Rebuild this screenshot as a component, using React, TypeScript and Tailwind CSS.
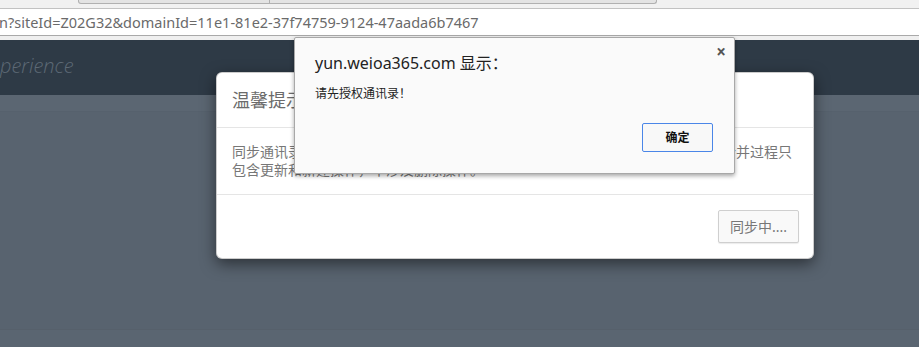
import React from "react";

const cjk = { fontFamily: '"Noto Sans", "Noto Sans CJK SC", sans-serif' };

export default function App() {
  return (
    <div
      className="relative w-[919px] h-[347px] overflow-hidden bg-[#58636f] flex flex-col"
      style={cjk}
    >
      {/* tab strip */}
      <div className="h-[9px] bg-[#f1f1f1] border-b border-[#c2c2c2] flex items-start shrink-0">
        <div className="w-[78px]" />
        <div className="w-[192px] h-[4px] bg-[#e3e3e3] border-b border-l border-r border-[#b0b0b0] rounded-bl-[3px]" />
        <div className="w-[387px] h-[4px] bg-[#e3e3e3] border-b border-r border-[#b0b0b0] rounded-br-[3px]" />
      </div>
      {/* address bar */}
      <div className="h-[27px] bg-white border-b border-[#a9a9a9] flex items-center shrink-0">
        <span className="text-[14.5px] leading-[20px] text-[#6a6a6a] whitespace-nowrap -ml-[1px]">
          n?siteId=Z02G32&amp;domainId=11e1-81e2-37f74759-9124-47aada6b7467
        </span>
      </div>
      <div className="h-[4px] bg-[#efefef] shrink-0" />
      {/* dark header */}
      <div className="h-[55px] bg-[#2e3a46] flex items-start shrink-0">
        <span
          className="mt-[14px] text-[20px] leading-[24px] italic font-light text-[#5d6975] whitespace-nowrap"
          style={{ fontFamily: '"Open Sans", sans-serif' }}
        >
          perience
        </span>
      </div>
      <div className="h-[17px] bg-[#5b6672] border-b border-[#56616d] shrink-0" />
      <div className="flex-1" />
      <div className="h-[18px] border-t border-[#56606b] bg-[#5a6571] shrink-0" />

      {/* bootstrap modal */}
      <div className="absolute left-[216px] top-[72px] w-[598px] h-[187px] bg-white rounded-[6px] border border-black/20 shadow-[0_5px_15px_rgba(0,0,0,0.5)] flex flex-col">
        <div className="h-[55px] px-[15px] flex items-center border-b border-[#e5e5e5]">
          <span className="text-[18px] leading-[24px] text-[#6b6b6b]">温馨提示</span>
        </div>
        <div className="px-[15px] py-[15px] text-[14px] leading-[18px] text-[#777]">
          <div className="whitespace-nowrap">同步通讯录将把本系统的部门和人员信息同步到微信企业号通讯录中进行合并，合并过程只</div>
          <div className="whitespace-nowrap">包含更新和新建操作，不涉及删除操作。</div>
        </div>
        <div className="flex-1 border-t border-[#e5e5e5] flex items-center justify-end px-[14px]">
          <div className="h-[33px] px-[11px] flex items-center bg-[#f9f9f9] border border-[#cfcfcf] rounded-[2px] text-[14px] text-[#777] shadow-[0_1px_1px_rgba(0,0,0,0.08)]">
            同步中....
          </div>
        </div>
      </div>

      {/* chrome alert */}
      <div className="absolute left-[294px] top-[37px] w-[441px] h-[137px] bg-[#fafafa] border border-[#a8a8a8] rounded-[2px] shadow-[0_2px_4px_rgba(0,0,0,0.35)] flex flex-col px-[20px] pt-[15px]">
        <div className="text-[16px] leading-[20px] text-[#222]">yun.weioa365.com 显示：</div>
        <div className="mt-[13px] text-[12px] leading-[16px] text-[#222]">请先授权通讯录！</div>
        <div className="flex justify-end mt-[21px] mr-[1px]">
          <div className="w-[71px] h-[29px] flex items-center justify-center bg-[#f8f8f8] border border-[#4a86e8] rounded-[2px] text-[12px] font-bold text-[#111]">
            确定
          </div>
        </div>
        <div className="absolute right-[8px] top-[5px] text-[17px] leading-[17px] font-bold text-[#555]">
          ×
        </div>
      </div>
    </div>
  );
}
